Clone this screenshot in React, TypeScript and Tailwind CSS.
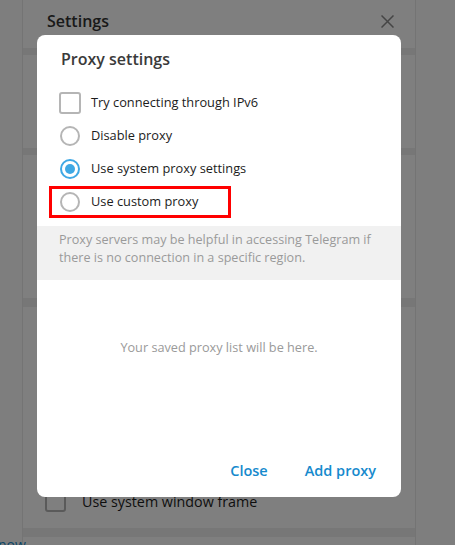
import React from 'react';

const font = { fontFamily: '"Open Sans", "Noto Sans", sans-serif' };

const Radio: React.FC<{ checked?: boolean; label: string }> = ({ checked, label }) => (
  <div className="flex h-[33px] items-center pl-[23px]">
    <span
      className={`flex h-[20px] w-[20px] items-center justify-center rounded-full border-2 ${
        checked ? 'border-[#3fa8e4]' : 'border-[#b5b5b5]'
      }`}
    >
      {checked && <span className="h-[10px] w-[10px] rounded-full bg-[#3fa8e4]" />}
    </span>
    <span className="ml-[11px] text-[12.8px] text-[#1c1c1c]">{label}</span>
  </div>
);

export default function App() {
  return (
    <div className="relative h-[545px] w-[455px] overflow-hidden bg-[#fcfcfc]" style={font}>
      {/* Page behind the dialog */}
      <div className="ml-[22px] flex h-full w-[394px] flex-col border-x border-[#e9e9e9] bg-white">
        <div className="flex h-[48px] items-center justify-between pb-[6px] pl-[24px] pr-[21px]">
          <span className="text-[16px] font-semibold text-[#333]">Settings</span>
          <svg width="13" height="13" viewBox="0 0 13 13">
            <path d="M0.5 0.5L12.5 12.5M12.5 0.5L0.5 12.5" stroke="#8a8a8a" strokeWidth="1.5" />
          </svg>
        </div>
        <div className="h-[7px] bg-[#eeeeee]" />
        <div className="h-[93px]" />
        <div className="h-[7px] bg-[#eeeeee]" />
        <div className="h-[143px]" />
        <div className="h-[9px] bg-[#eeeeee]" />
        <div className="flex h-[221px] flex-col justify-end pb-[16px]">
          <div className="flex items-center pl-[22px]">
            <span className="h-[21px] w-[21px] rounded-[3px] border-2 border-[#b5b5b5]" />
            <span className="ml-[16px] text-[14.3px] text-[#1c1c1c]">Use system window frame</span>
          </div>
        </div>
        <div className="h-[9px] bg-[#eeeeee]" />
        <div className="flex-1" />
      </div>
      <span className="absolute bottom-[-10px] left-[-2px] text-[14px] text-[#168acd]">now</span>

      {/* Dim overlay */}
      <div className="absolute inset-0 bg-black/50" />

      {/* Dialog */}
      <div className="absolute left-[37px] top-[35px] flex h-[462px] w-[364px] flex-col rounded-[8px] bg-white">
        <div className="pl-[24px] pt-[12px] text-[16px] font-semibold leading-[24px] text-[#3a3a3a]">
          Proxy settings
        </div>
        <div className="mt-[15px] flex h-[33px] items-center pl-[22px]">
          <span className="h-[22px] w-[22px] rounded-[3px] border-2 border-[#b5b5b5]" />
          <span className="ml-[10px] text-[12.8px] text-[#1c1c1c]">Try connecting through IPv6</span>
        </div>
        <Radio label="Disable proxy" />
        <Radio checked label="Use system proxy settings" />
        <Radio label="Use custom proxy" />
        <div className="mt-[8px] h-[54px] bg-[#f1f1f1] px-[22px] pt-[5px] text-[12.6px] leading-[18px] text-[#9a9a9a]">
          Proxy servers may be helpful in accessing Telegram if there is no connection in a specific region.
        </div>
        <div className="flex flex-1 items-center justify-center pb-[29px] text-[12.7px] text-[#9a9a9a]">
          Your saved proxy list will be here.
        </div>
        <div className="flex h-[52px] items-center justify-end gap-[37px] pr-[25px] text-[14.5px] font-semibold text-[#168acd]">
          <span>Close</span>
          <span>Add proxy</span>
        </div>

        {/* Highlight box */}
        <div className="absolute left-[12px] top-[151px] h-[32px] w-[182px] border-[3px] border-[#ff0000]" />
      </div>
    </div>
  );
}
